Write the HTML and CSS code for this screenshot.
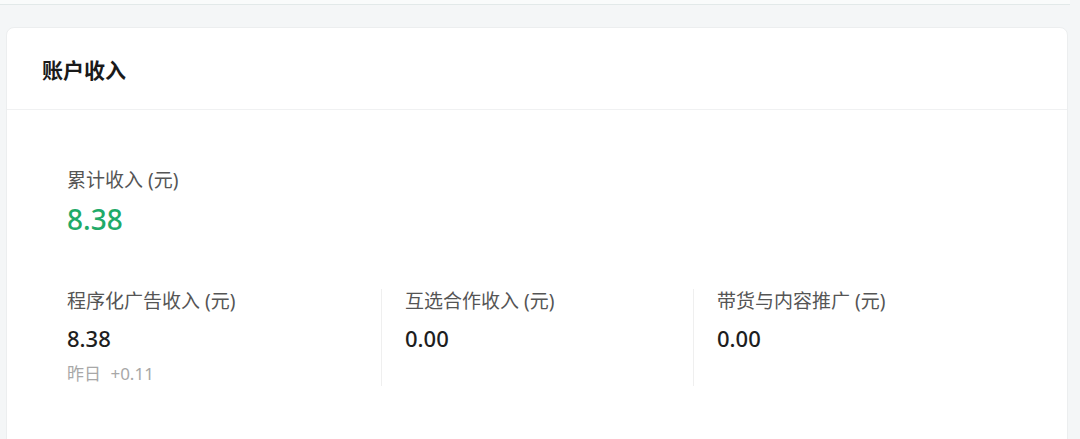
FILE: index.html
```html
<!DOCTYPE html>
<html lang="zh-CN">
<head>
    <meta charset="UTF-8">
    <title>账户收入</title>
    <link rel="stylesheet" href="styles.css">
</head>
<body>
<div class="prev-card"></div>

<div class="card">
    <div class="card-header">账户收入</div>
    <div class="card-body">
        <div class="total">
            <div class="label">累计收入 (元)</div>
            <div class="total-value">8.38</div>
        </div>
        <div class="items">
            <div class="item">
                <div class="label">程序化广告收入 (元)</div>
                <div class="value">8.38</div>
                <div class="sub">昨日 +0.11</div>
            </div>
            <div class="item">
                <div class="label">互选合作收入 (元)</div>
                <div class="value">0.00</div>
            </div>
            <div class="item">
                <div class="label">带货与内容推广 (元)</div>
                <div class="value">0.00</div>
            </div>
        </div>
    </div>
</div>
</body>
</html>
```

FILE: styles.css
```css
body {
    margin: 0;
    background-color: #f4f6f7;
    font-family: "Noto Sans", "Noto Sans CJK SC", sans-serif;
    color: #222;
    overflow: hidden;
}

/* bottom edge of the card above */
.prev-card {
    height: 4px;
    margin-right: 10px;
    background-color: #f9fbfb;
    border-bottom: 1px solid #e2e9e9;
}

.card {
    margin: 22px 12px 0 6px;
    background-color: #fff;
    border: 1px solid #eceeef;
    border-radius: 8px;
    height: 440px;
}

.card-header {
    display: flex;
    align-items: center;
    height: 81px;
    padding-left: 35px;
    font-size: 21px;
    font-weight: bold;
    color: #1a1a1a;
    border-bottom: 1px solid #f0f1f2;
}

.card-body {
    padding: 57px 0 0 60px;
}

.label {
    font-size: 19px;
    line-height: 26px;
    color: #555;
}

.total-value {
    margin-top: 9px;
    font-size: 28px;
    font-weight: 500;
    line-height: 34px;
    color: #1faa68;
}

.items {
    display: grid;
    grid-template-columns: 314px 312px 1fr;
    margin-top: 53px;
}

.item {
    min-height: 97px;
}

.item + .item {
    border-left: 1px solid #efefef;
    padding-left: 23px;
}

.item .label {
    line-height: 24px;
}

.value {
    margin-top: 10px;
    font-size: 22px;
    font-weight: 500;
    line-height: 30px;
    color: #1e1e1e;
}

.sub {
    margin-top: 10px;
    font-size: 17px;
    line-height: 22px;
    word-spacing: 5px;
    color: #a8a8a8;
}
```
